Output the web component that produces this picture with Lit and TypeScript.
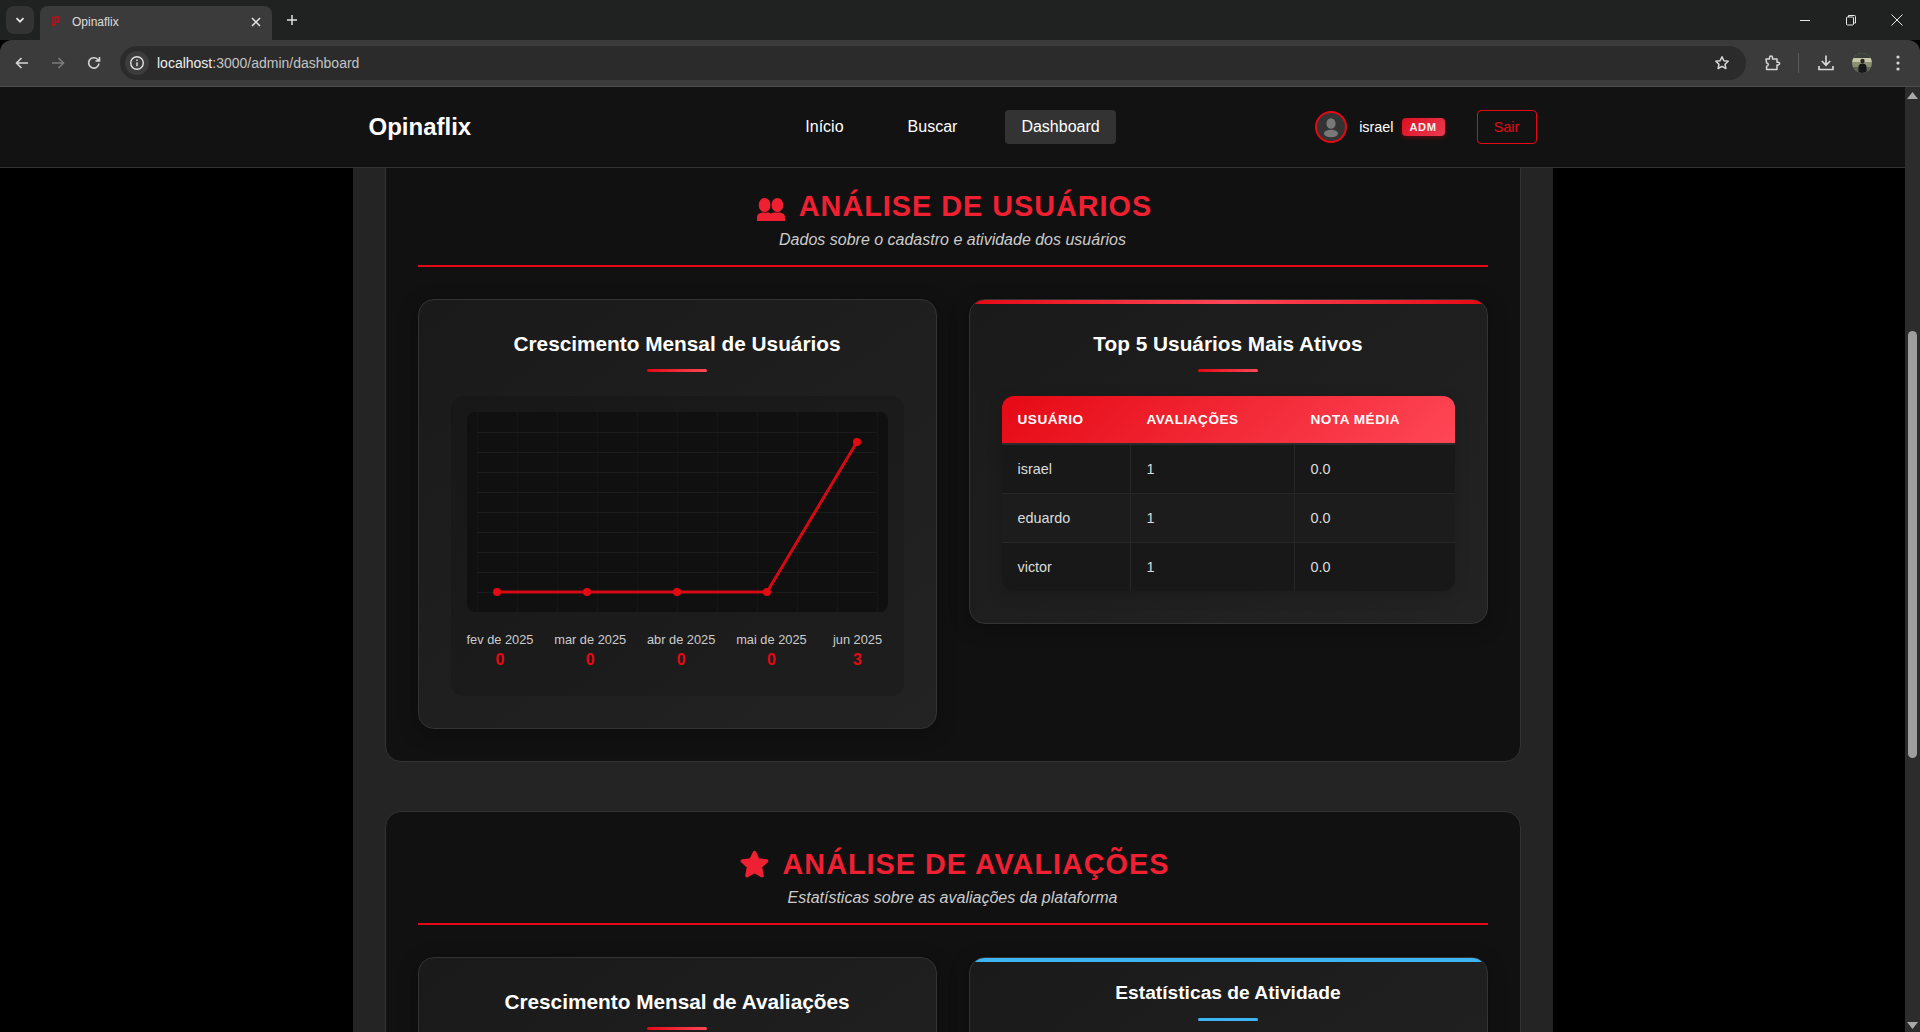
import { LitElement, html, css, svg } from "lit";
import { customElement } from "lit/decorators.js";

const months = [
  { label: "fev de 2025", value: 0 },
  { label: "mar de 2025", value: 0 },
  { label: "abr de 2025", value: 0 },
  { label: "mai de 2025", value: 0 },
  { label: "jun 2025", value: 3 },
];
const users = [
  { name: "israel", count: 1, score: "0.0" },
  { name: "eduardo", count: 1, score: "0.0" },
  { name: "victor", count: 1, score: "0.0" },
];

@customElement("app-root")
export class AppRoot extends LitElement {
  static styles = css`
    :host { display: block; height: 1032px; overflow: hidden; background: #000; font-family: "Liberation Sans", Arial, sans-serif; color: #fff; }
    * { box-sizing: border-box; }
    .window { height: 1032px; display: flex; flex-direction: column; }

    .tabstrip { height: 40px; background: #202222; display: flex; align-items: flex-start; padding: 6px 0 0 6px; flex: none; }
    .tabmenu { width: 28px; height: 28px; border-radius: 8px; background: #333; display: flex; align-items: center; justify-content: center; margin-right: 6px; }
    .tab { width: 232px; height: 34px; background: #3b3b3b; border-radius: 8px 8px 0 0; display: flex; align-items: center; padding: 0 10px 3px 12px; font-size: 12px; color: #ddd; }
    .tab .fav { margin-right: 12px; }
    .tab .name { flex: 1; }
    .newtab { margin: 7px 0 0 13px; display: flex; }
    .winctl { margin-left: auto; display: flex; height: 28px; align-items: center; }
    .winctl span { width: 46px; display: flex; justify-content: center; }
    .toolbar { height: 47px; flex: none; background: #3b3b3b; border-bottom: 1px solid #4c4c4c; border-radius: 12px 12px 0 0; display: flex; align-items: center; }
    .tb { width: 36px; display: flex; justify-content: center; flex: none; }
    .tools { display: flex; align-items: center; margin-left: 4px; }
    .omni { width: 1626px; height: 34px; margin-left: 8px; border-radius: 17px; background: #2b2b2b; display: flex; align-items: center; padding-left: 5px; font-size: 14px; color: #c4c4c4; }
    .chip { width: 24px; height: 24px; border-radius: 50%; background: #3c3c3c; display: flex; align-items: center; justify-content: center; margin-right: 8px; }
    .omni b { font-weight: 400; color: #f0f0f0; }
    .omni .bookmark { margin-left: auto; margin-right: 16px; display: flex; }
    .right-tools { display: flex; align-items: center; margin-left: 8px; }
    .sep { width: 1px; height: 20px; background: #5a5a5a; margin: 0 9px 0 8px; }

    .body { flex: 1; display: flex; min-height: 0; }
    .viewport { flex: 1; min-width: 0; display: flex; flex-direction: column; }
    .scrollbar { width: 15px; flex: none; background: #2c2c2c; display: flex; flex-direction: column; align-items: center; padding-top: 5px; }
    .thumb { width: 9px; height: 427px; background: #9e9e9e; border-radius: 5px; margin-top: 232px; }
    .down { margin-top: auto; margin-bottom: 3px; display: flex; }

    nav { height: 81px; flex: none; background: #121212; border-bottom: 1px solid #333; display: flex; justify-content: center; }
    .nav-inner { width: 1200px; padding: 0 16px; display: grid; grid-template-columns: 1fr auto 1fr; align-items: center; }
    .logo { font-size: 24px; font-weight: 700; }
    .links { display: flex; gap: 32px; }
    .links a { padding: 8px 16px; border-radius: 4px; font-size: 16px; color: #fff; line-height: 18px; }
    .links a.active { background: #333; }
    .userbox { display: flex; align-items: center; justify-content: flex-end; }
    .avatar { width: 32px; height: 32px; border-radius: 50%; border: 2px solid #e50914; background: #333; display: flex; align-items: center; justify-content: center; margin-right: 12px; }
    .uname { font-size: 14.4px; margin-right: 8px; }
    .badge { font-size: 11.2px; font-weight: 700; letter-spacing: .5px; line-height: 14px; padding: 2px 8px; border-radius: 4px; color: #f0f0f0; background: linear-gradient(135deg, #dc1020, #ec3a50); box-shadow: 0 2px 5px rgba(229, 9, 20, .28); margin-right: 32px; }
    .logout { width: 60px; height: 34px; border: 1px solid #e50914; border-radius: 4px; color: #e50914; font-size: 14.4px; display: flex; align-items: center; justify-content: center; }

    .scroller { flex: 1; min-height: 0; overflow: hidden; display: flex; justify-content: center; }
    .page { width: 1200px; background: #242424; padding: 0 32px; margin-top: -15px; display: flex; flex-direction: column; gap: 49px; align-self: flex-start; }
    .section { background: #111; border: 1px solid #333; border-radius: 16px; padding: 32px; }
    .sec-head { border-bottom: 2px solid #e50914; height: 81px; text-align: center; margin-bottom: 32px; }
    .sec-title { margin: 0; padding-left: 4px; display: flex; align-items: center; justify-content: center; font-size: 28.8px; font-weight: 700; letter-spacing: 1px; line-height: 40px; color: #f02033; text-transform: uppercase; }
    .sec-title svg { flex: none; margin-right: 14px; }
    .sec-title svg.users { margin-top: 6px; }
    .sec-sub { margin: 4px 0 0; font-size: 16px; font-style: italic; color: #ccc; line-height: 20px; }
    .grid { display: grid; grid-template-columns: 1fr 1fr; gap: 32px; align-items: start; }

    .card { position: relative; overflow: hidden; border: 1px solid #333; border-radius: 16px; padding: 32px; background: linear-gradient(145deg, #1a1a1a, #232323); box-shadow: 0 4px 20px rgba(0, 0, 0, .3); }
    .card.tight { padding-top: 24px; }
    .topbar { position: absolute; left: 0; right: 0; top: 0; height: 4px; background: linear-gradient(90deg, #e50914, #ff4757, #e50914); }
    .topbar.blue { background: #3db5f2; }
    .card-title { margin: 0; text-align: center; font-size: 20.8px; font-weight: 700; line-height: 24px; color: #fff; }
    .card.tight .card-title { font-size: 19.2px; line-height: 22px; }
    .rule { width: 60px; height: 3px; margin: 13px auto 24px; border-radius: 2px; background: linear-gradient(90deg, #e50914, #ff4757); }
    .rule.blue { background: #3db5f2; margin-top: 14px; }

    .chart { height: 300px; padding: 16px; border-radius: 12px; background: rgba(0, 0, 0, .12); }
    .plot { height: 200px; background: #101010; border-radius: 8px; display: flex; justify-content: center; }
    .plot svg { display: block; overflow: visible; }
    .labels { display: flex; justify-content: space-between; margin-top: 20px; }
    .col { min-width: 60px; text-align: center; }
    .col .m { font-size: 12.8px; line-height: 15px; color: #ccc; }
    .col .v { font-size: 16px; font-weight: 700; line-height: 18px; margin-top: 4px; color: #e50914; }

    table { width: 100%; border-collapse: separate; border-spacing: 0; table-layout: fixed; border-radius: 12px; overflow: hidden; background: #181818; box-shadow: 0 4px 16px rgba(0, 0, 0, .15); }
    th { height: 49px; padding: 0 16px; text-align: left; font-size: 13.6px; font-weight: 700; letter-spacing: .5px; text-transform: uppercase; color: #fff; border-bottom: 2px solid #2b2b2b; }
    thead tr { background: linear-gradient(135deg, #e50914, #ff4757); }
    td { height: 49px; padding: 0 16px; font-size: 14.4px; color: #ddd; border-bottom: 1px solid #262626; border-right: 1px solid #262626; }
    td:last-child { border-right: 0; }
    tr:last-child td { border-bottom: 0; height: 48px; }
    tbody tr:nth-child(even) { background: #1c1c1c; }
    .stat-filler { height: 200px; }
  `;

  private usersIcon() {
    return html`<svg class="users" width="28" height="23" viewBox="0 0 28 23" fill="#f02033" aria-hidden="true">
      <ellipse cx="7.6" cy="7" rx="5.9" ry="7" /><ellipse cx="20.4" cy="7" rx="5.9" ry="7" />
      <path d="M0 23v-4.2c0-2.2 2-3.6 5-4.3h5.500c1.800 0 3 .6 3.500 1.300.5-.7 1.700-1.300 3.500-1.300H23c3 .7 5 2.100 5 4.300V23z" />
    </svg>`;
  }

  private starIcon() {
    return html`<svg width="29" height="28" viewBox="0 0 29 28" fill="#f02033" stroke="#f02033" stroke-width="3.4" stroke-linejoin="round" aria-hidden="true">
      <path d="M14.5 2.500l3.600 7.400 8.600 1-6.200 5.800 1.600 9-7.600-4.300-7.600 4.300 1.600-9-6.200-5.800 8.600-1z" />
    </svg>`;
  }

  private plotBox() {
    const points = [[20, 180], [110, 180], [200, 180], [290, 180], [380, 30]];
    const vs = Array.from({ length: 11 }, (_, i) => i * 40);
    const hs = Array.from({ length: 9 }, (_, i) => (i + 1) * 20);
    return html`<div class="plot">
      <svg width="400" height="200" viewBox="0 0 400 200">
        ${vs.map((x) => svg`<line x1=${x + 0.5} x2=${x + 0.5} y1="0" y2="200" stroke="#161616" />`)}
        ${hs.map((y) => svg`<line x1="0" x2="400" y1=${y + 0.5} y2=${y + 0.5} stroke="#1b1b1b" />`)}
        <polyline points=${points.map((p) => p.join(",")).join(" ")} fill="none" stroke="#e50914" stroke-width="3" stroke-opacity=".92" />
        ${points.map((p) => svg`<circle cx=${p[0]} cy=${p[1]} r="4" fill="#e50914" />`)}
      </svg>
    </div>`;
  }

  private chartCard(title: string, full: boolean) {
    return html`<div class="card">
      <h3 class="card-title">${title}</h3>
      <div class="rule"></div>
      <div class="chart">
        ${full
          ? html`${this.plotBox()}
              <div class="labels">
                ${months.map((m) => html`<div class="col"><div class="m">${m.label}</div><div class="v">${m.value}</div></div>`)}
              </div>`
          : ""}
      </div>
    </div>`;
  }

  private tableCard() {
    return html`<div class="card">
      <div class="topbar"></div>
      <h3 class="card-title">Top 5 Usuários Mais Ativos</h3>
      <div class="rule"></div>
      <table>
        <colgroup><col style="width:129px" /><col style="width:164px" /><col /></colgroup>
        <thead><tr><th>Usuário</th><th>Avaliações</th><th>Nota Média</th></tr></thead>
        <tbody>
          ${users.map((u) => html`<tr><td>${u.name}</td><td>${u.count}</td><td>${u.score}</td></tr>`)}
        </tbody>
      </table>
    </div>`;
  }

  private chrome() {
    return html`
      <div class="tabstrip">
        <div class="tabmenu"><svg width="12" height="12" viewBox="0 0 12 12" fill="none" stroke="#e6e6e6" stroke-width="1.7"><path d="M2.5 4.2 6 7.7l3.5-3.5" /></svg></div>
        <div class="tab">
          <svg class="fav" width="8" height="11" viewBox="0 0 8 11" fill="none" stroke="#b8101c" stroke-width="1.6"><path d="M1 1h5.500v5H3.400M1 1v8.500l2.400-1V1" /></svg>
          <span class="name">Opinaflix</span>
          <svg width="12" height="12" viewBox="0 0 12 12" fill="none" stroke="#e6e6e6" stroke-width="1.5"><path d="M2 2l8 8M10 2l-8 8" /></svg>
        </div>
        <div class="newtab"><svg width="14" height="14" viewBox="0 0 14 14" fill="none" stroke="#e0e0e0" stroke-width="1.5"><path d="M7 2v10M2 7h10" /></svg></div>
        <div class="winctl">
          <span><svg width="12" height="12" viewBox="0 0 12 12" stroke="#e6e6e6" fill="none"><path d="M1 6.500h10" /></svg></span>
          <span><svg width="12" height="12" viewBox="0 0 12 12" stroke="#e6e6e6" fill="none"><rect x="1.500" y="3" width="7" height="8" rx="1" /><path d="M3.500 3V1.500h6a1 1 0 0 1 1 1V9H8.500" /></svg></span>
          <span><svg width="14" height="14" viewBox="0 0 14 14" stroke="#e6e6e6" fill="none"><path d="M1.500 1.500l11 11M12.500 1.500l-11 11" /></svg></span>
        </div>
      </div>
      <div class="toolbar">
        <div class="tools">
          <span class="tb"><svg width="16" height="16" viewBox="0 0 16 16" fill="none" stroke="#d6d6d6" stroke-width="1.6"><path d="M14 8H2.500M7.500 3 2.500 8l5 5" /></svg></span>
          <span class="tb"><svg width="16" height="16" viewBox="0 0 16 16" fill="none" stroke="#7c7c7c" stroke-width="1.6"><path d="M2 8h11.500M8.500 3l5 5-5 5" /></svg></span>
          <span class="tb"><svg width="16" height="16" viewBox="0 0 16 16" fill="none" stroke="#d6d6d6" stroke-width="1.6"><path d="M13 8.500A5.200 5.200 0 1 1 11.600 4.300L13.500 6M13.500 2v4h-4" /></svg></span>
        </div>
        <div class="omni">
          <span class="chip"><svg width="16" height="16" viewBox="0 0 16 16" fill="none" stroke="#e2e2e2" stroke-width="1.4"><circle cx="8" cy="8" r="6.300" /><path d="M8 7.200v4M8 4.400v1.500" /></svg></span>
          <span><b>localhost</b>:3000/admin/dashboard</span>
          <span class="bookmark"><svg width="16" height="16" viewBox="0 0 16 16" fill="none" stroke="#d8d8d8" stroke-width="1.5" stroke-linejoin="round"><path d="M8 1.800l1.900 4 4.300.5-3.200 2.900.9 4.300L8 11.300l-3.900 2.200.9-4.300-3.200-2.900 4.300-.5z" /></svg></span>
        </div>
        <div class="right-tools">
          <span class="tb"><svg width="18" height="18" viewBox="0 0 18 18" fill="none" stroke="#d6d6d6" stroke-width="1.5" stroke-linejoin="round"><path d="M3 5h3.500V3.500a1.500 1.500 0 0 1 3 0V5H14v3.200h1.200a1.400 1.400 0 0 1 0 2.800H14v4.500H3.600v-3.200a1.600 1.600 0 0 0 0-3.400z" /></svg></span>
          <span class="sep"></span>
          <span class="tb"><svg width="18" height="18" viewBox="0 0 18 18" fill="none" stroke="#d6d6d6" stroke-width="1.7"><path d="M9 1.500V11M4.800 7 9 11.200 13.200 7M2 12v3.500h14V12" /></svg></span>
          <span class="tb"><svg width="20" height="20" viewBox="0 0 20 20"><defs><clipPath id="pc"><circle cx="10" cy="10" r="10" /></clipPath></defs><g clip-path="url(#pc)"><rect width="20" height="20" fill="#8d8f72" /><rect width="20" height="5" fill="#3b3f3c" /><rect y="5" width="20" height="4" fill="#c6c9a8" /><rect y="14" width="20" height="6" fill="#5d6150" /><circle cx="10.500" cy="8" r="2.200" fill="#2a2320" /><path d="M6.500 20v-6c0-2 1.500-3.500 4-3.500s4 1.500 4 3.500v6z" fill="#15161a" /></g></svg></span>
          <span class="tb"><svg width="4" height="16" viewBox="0 0 4 16" fill="#d6d6d6"><circle cx="2" cy="2" r="1.600" /><circle cx="2" cy="8" r="1.600" /><circle cx="2" cy="14" r="1.600" /></svg></span>
        </div>
      </div>`;
  }

  render() {
    return html`<div class="window">
      ${this.chrome()}
      <div class="body">
        <div class="viewport">
          <nav>
            <div class="nav-inner">
              <div class="logo">Opinaflix</div>
              <div class="links"><a>Início</a><a>Buscar</a><a class="active">Dashboard</a></div>
              <div class="userbox">
                <span class="avatar"><svg width="20" height="22" viewBox="0 0 20 22" fill="#787878"><ellipse cx="10" cy="7.500" rx="4.600" ry="5.300" /><ellipse cx="10" cy="17.500" rx="7" ry="3.800" /></svg></span>
                <span class="uname">israel</span>
                <span class="badge">ADM</span>
                <span class="logout">Sair</span>
              </div>
            </div>
          </nav>
          <div class="scroller">
            <div class="page">
              <section class="section">
                <div class="sec-head">
                  <h2 class="sec-title">${this.usersIcon()}Análise de Usuários</h2>
                  <p class="sec-sub">Dados sobre o cadastro e atividade dos usuários</p>
                </div>
                <div class="grid">${this.chartCard("Crescimento Mensal de Usuários", true)}${this.tableCard()}</div>
              </section>
              <section class="section">
                <div class="sec-head">
                  <h2 class="sec-title">${this.starIcon()}Análise de Avaliações</h2>
                  <p class="sec-sub">Estatísticas sobre as avaliações da plataforma</p>
                </div>
                <div class="grid">
                  ${this.chartCard("Crescimento Mensal de Avaliações", false)}
                  <div class="card tight">
                    <div class="topbar blue"></div>
                    <h3 class="card-title">Estatísticas de Atividade</h3>
                    <div class="rule blue"></div>
                    <div class="stat-filler"></div>
                  </div>
                </div>
              </section>
            </div>
          </div>
        </div>
        <div class="scrollbar">
          <svg width="11" height="7" viewBox="0 0 11 7" fill="#a8a8a8"><path d="M5.500 0 11 7H0z" /></svg>
          <div class="thumb"></div>
          <span class="down"><svg width="11" height="7" viewBox="0 0 11 7" fill="#a8a8a8"><path d="M0 0h11L5.500 7z" /></svg></span>
        </div>
      </div>
    </div>`;
  }
}
